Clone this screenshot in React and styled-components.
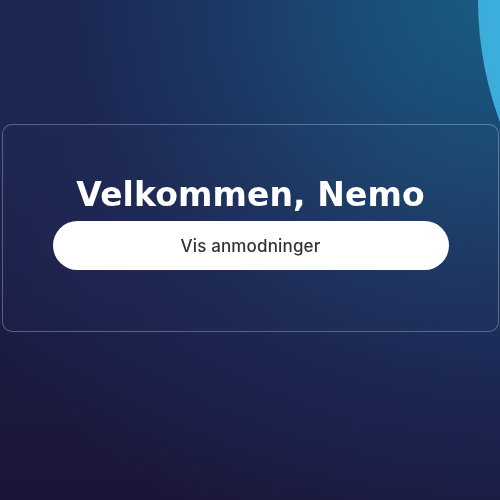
import React from "react";
import styled, { createGlobalStyle } from "styled-components";

const Global = createGlobalStyle`
  html, body { margin: 0; padding: 0; }
  body { font-family: Inter, "Noto Sans", sans-serif; }
  #root { width: 500px; height: 500px; }
`;

const Page = styled.div`
  position: relative;
  width: 500px;
  height: 500px;
  overflow: hidden;
  display: flex;
  flex-direction: column;
  padding: 124px 1px 0 2px;
  box-sizing: border-box;
  background:
    radial-gradient(ellipse 640px 580px at 100% 0%, #1a5c82 0%, #1a4c75 22%, #1c3662 46%, #1c2652 68%, rgba(27,23,57,0) 100%),
    linear-gradient(180deg, #1c2a52 0%, #1b1d45 60%, #1b1638 100%);
`;

const Blob = styled.div`
  position: absolute;
  left: 478px;
  top: -350px;
  width: 700px;
  height: 700px;
  border-radius: 50%;
  background: radial-gradient(circle at 50% 50%, #44bde6 0%, #3aaad8 85%, #2f90c0 97%, #2a7fae 100%);
`;

const Card = styled.section`
  position: relative;
  z-index: 1;
  height: 208px;
  box-sizing: border-box;
  border: 1px solid rgba(255, 255, 255, 0.28);
  border-radius: 10px;
  background: rgba(255, 255, 255, 0.01);
  backdrop-filter: blur(14px);
  display: flex;
  flex-direction: column;
  align-items: center;
  padding: 50px 50px 0 50px;
  gap: 6px;
`;

const Title = styled.h1`
  margin: 0;
  font-family: "DejaVu Sans", Inter, sans-serif;
  font-weight: 700;
  font-size: 33px;
  line-height: 40px;
  color: #ffffff;
  letter-spacing: 0.1px;
`;

const Button = styled.button`
  width: 396px;
  height: 49px;
  border: none;
  border-radius: 25px;
  background: #ffffff;
  color: #333333;
  font-family: Inter, "Noto Sans", sans-serif;
  font-weight: 500;
  font-size: 17px;
  letter-spacing: 0.15px;
  cursor: pointer;
`;

export default function App() {
  return (
    <>
      <Global />
      <Page>
        <Blob />
        <Card>
          <Title>Velkommen, Nemo</Title>
          <Button>Vis anmodninger</Button>
        </Card>
      </Page>
    </>
  );
}
